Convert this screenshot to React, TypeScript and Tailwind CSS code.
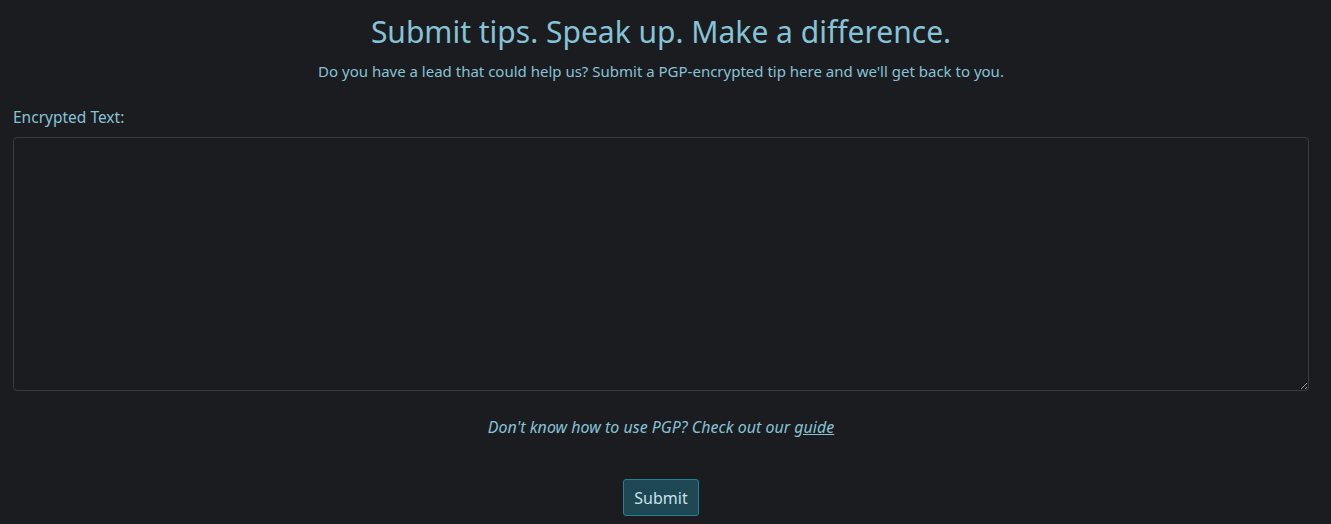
export default function App() {
  return (
    <div className="min-h-[524px] w-full bg-[#1b1c1f] text-[#86c3d7]" style={{ fontFamily: '"Noto Sans", sans-serif' }}>
      <div className="ml-[13px] w-[1296px] flex flex-col">
        <h1 className="text-center text-[30px] leading-[38px] pt-[13px]">Submit tips. Speak up. Make a difference.</h1>
        <p className="text-center text-[15px] leading-[20px] mt-[10px]">Do you have a lead that could help us? Submit a PGP-encrypted tip here and we'll get back to you.</p>
        <label className="text-[15.5px] leading-[20px] mt-[26px]">Encrypted Text:</label>
        <textarea className="mt-[10px] h-[254px] w-full rounded-[4px] border border-[#3a3b3f] bg-[#1b1c1f] text-[#86c3d7] outline-none" />
        <p className="text-center italic text-[16px] leading-[20px] mt-[26px]">
          Don't know how to use PGP? Check out our <a className="underline">guide</a>
        </p>
        <div className="flex justify-center mt-[42px]">
          <button className="h-[37px] px-[10px] rounded-[3px] border border-[#2a7f93] bg-[#1d4753] text-[#c9e2ea] text-[16px]">Submit</button>
        </div>
      </div>
    </div>
  );
}
